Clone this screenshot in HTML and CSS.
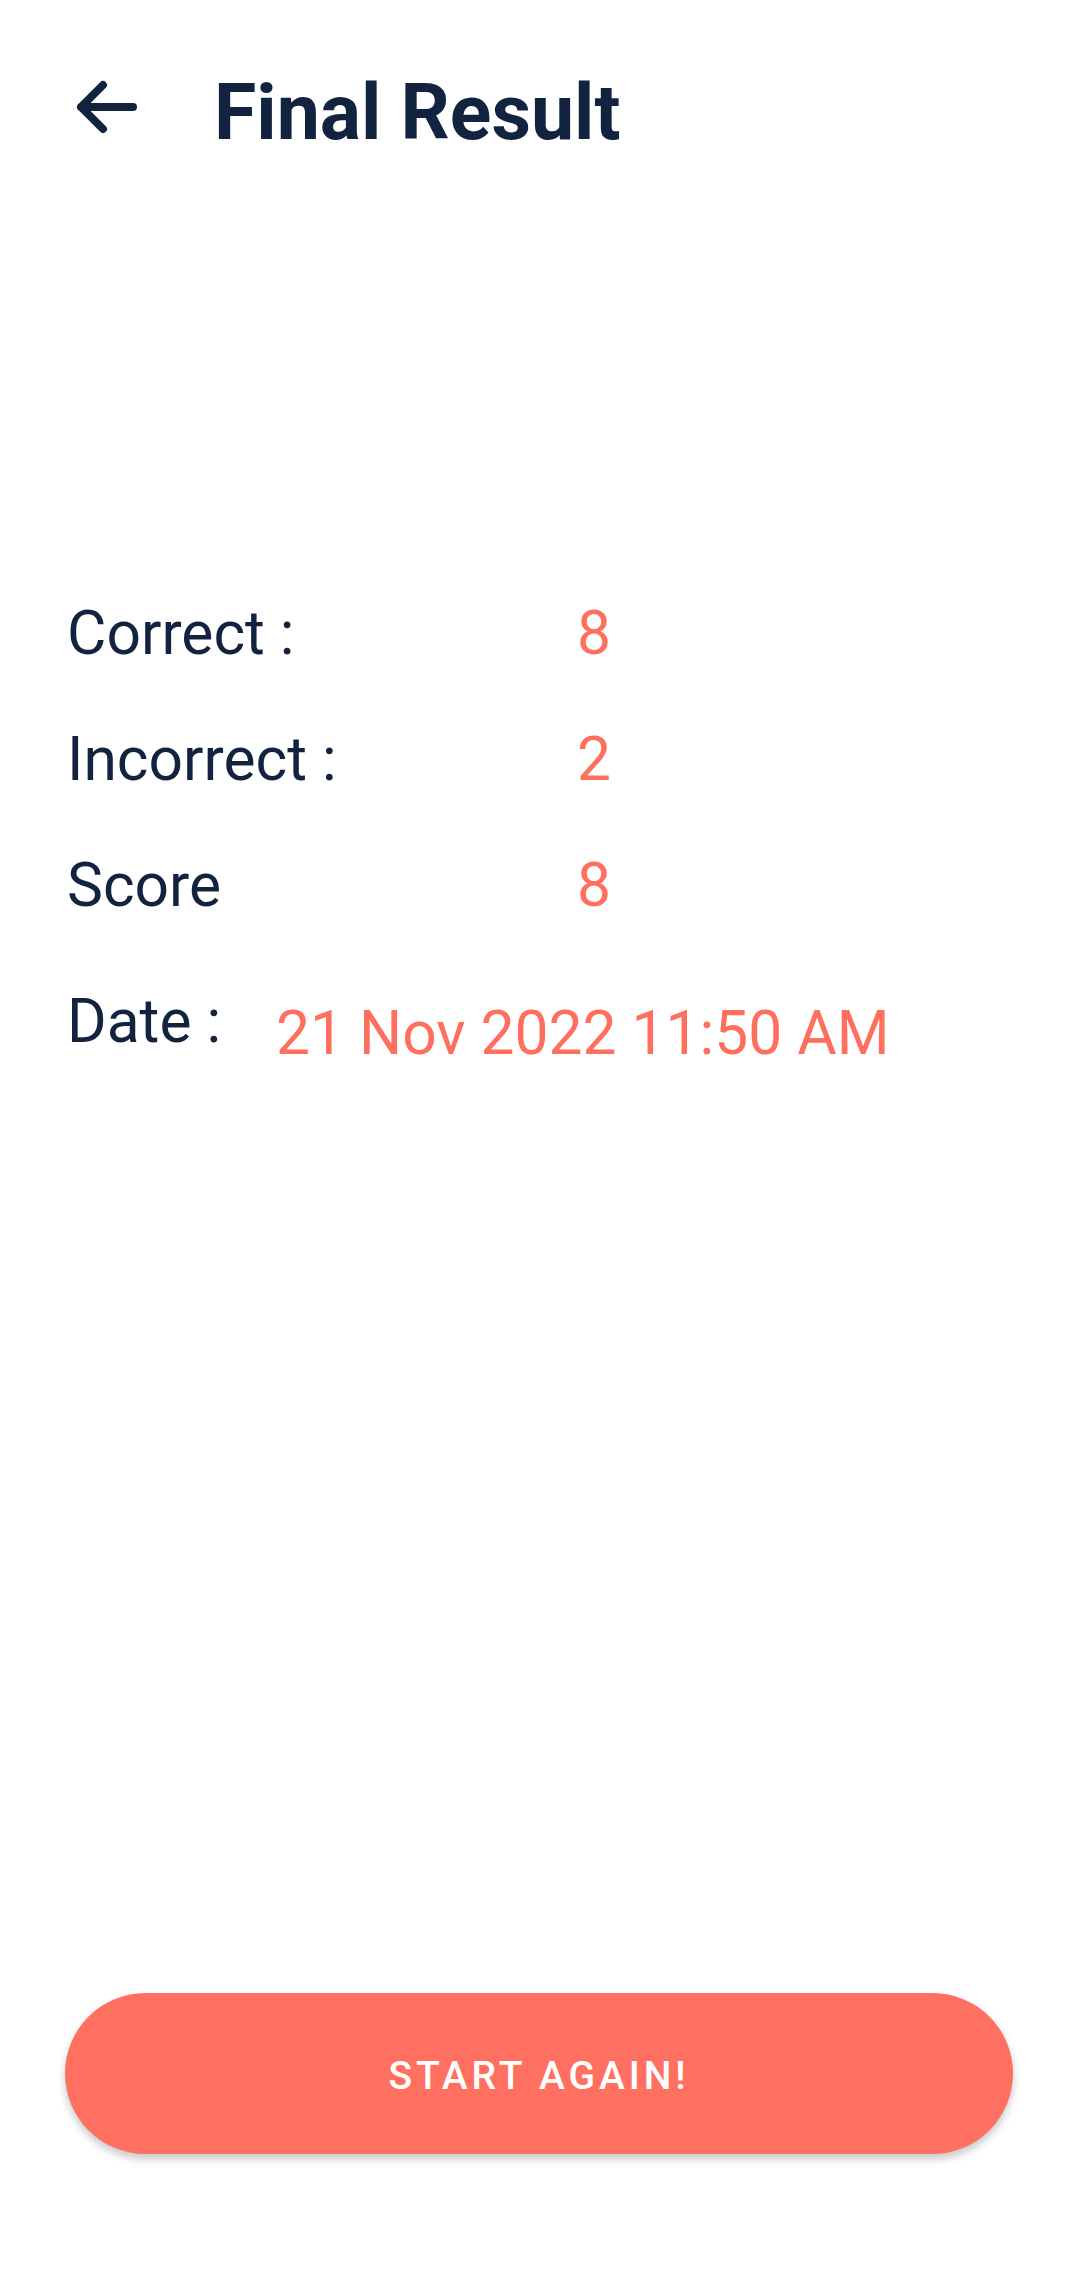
FILE: index.html
```html
<!DOCTYPE html>
<html>
<head>
<meta charset="utf-8">
<link rel="stylesheet" href="styles.css">
</head>
<body>
<div class="screen">
  <header class="header">
    <svg class="back" width="70" height="60" viewBox="0 0 70 60">
      <path d="M31 8 L9 30 L31 52 M9 30 H61" fill="none" stroke="#11233F" stroke-width="8" stroke-linecap="round" stroke-linejoin="round"/>
    </svg>
    <h1 class="title">Final Result</h1>
  </header>

  <section class="results">
    <div class="row">
      <span class="label">Correct :</span>
      <span class="value">8</span>
    </div>
    <div class="row">
      <span class="label">Incorrect :</span>
      <span class="value">2</span>
    </div>
    <div class="row">
      <span class="label">Score</span>
      <span class="value">8</span>
    </div>
    <div class="row row-date">
      <span class="label label-date">Date :</span>
      <span class="value value-date">21 Nov 2022 11:50 AM</span>
    </div>
  </section>

  <div class="spacer"></div>

  <button class="btn">Start again!</button>
</div>
</body>
</html>
```
FILE: styles.css
```css
* { box-sizing: border-box; }
html, body {
  margin: 0;
  padding: 0;
  background: #ffffff;
}
body {
  font-family: Roboto, "Liberation Sans", sans-serif;
  color: #11233F;
}
.screen {
  width: 1080px;
  height: 2280px;
  display: flex;
  flex-direction: column;
  padding-bottom: 126px;
}
.header {
  display: flex;
  align-items: flex-start;
  padding-top: 68px;
  height: 158px;
}
.back {
  margin-left: 72px;
  margin-top: 9px;
  flex: none;
}
.title {
  margin: 0 0 0 72px;
  font-size: 77px;
  line-height: 90px;
  font-weight: 700;
  color: #11233F;
}
.results {
  margin-top: 440px;
  padding-left: 67px;
  display: flex;
  flex-direction: column;
  gap: 54px;
}
.row {
  display: flex;
  align-items: flex-start;
  font-size: 60.5px;
  line-height: 72px;
}
.label {
  width: 510px;
  flex: none;
  color: #11233F;
}
.value {
  color: #FF6F5E;
}
.row-date {
  margin-top: 10px;
}
.label-date {
  width: 209px;
}
.value-date {
  margin-top: 12px;
}
.spacer {
  flex: 1;
}
.btn {
  margin: 0 67px 0 65px;
  height: 161px;
  padding-top: 5px;
  border: none;
  border-radius: 81px;
  background: #FF7060;
  color: #ffffff;
  font-family: Roboto, "Liberation Sans", sans-serif;
  font-size: 39px;
  font-weight: 500;
  letter-spacing: 0.1em;
  text-transform: uppercase;
  box-shadow: 0 5px 8px rgba(0, 0, 0, 0.22);
}
```
